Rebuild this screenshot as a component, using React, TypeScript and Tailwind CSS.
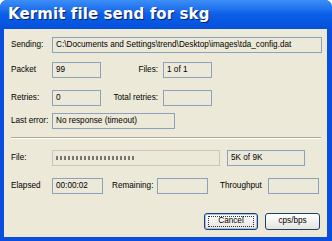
const font = { fontFamily: '"Liberation Sans", Arial, sans-serif' };

function Box({ w, children, muted }: { w: string; children?: React.ReactNode; muted?: boolean }) {
  return (
    <div
      className={`${w} h-[16px] border ${muted ? "border-[#c9c7bc]" : "border-[#8aa2bd]"} flex items-center pl-[3px] text-[8.2px] text-black whitespace-nowrap overflow-hidden`}
    >
      {children}
    </div>
  );
}

function Label({ w, children, right }: { w: string; children: React.ReactNode; right?: boolean }) {
  return (
    <div className={`${w} shrink-0 text-[8.2px] text-black whitespace-nowrap ${right ? "text-right pr-[5px]" : ""}`}>
      {children}
    </div>
  );
}

function Btn({ w, children, focus }: { w: string; children: React.ReactNode; focus?: boolean }) {
  return (
    <div
      className={`${w} h-[17px] rounded-[3px] border border-[#1c3f74] bg-gradient-to-b from-white to-[#e6e4dc] flex items-center justify-center ${
        focus ? "shadow-[inset_0_0_0_1px_#a9c1ea]" : ""
      }`}
    >
      <div
        className={`w-[calc(100%-6px)] h-[11px] flex items-center justify-center text-[8.2px] text-black ${
          focus ? "border border-dotted border-[#333]" : ""
        }`}
      >
        {children}
      </div>
    </div>
  );
}

export default function App() {
  const blocks = Array.from({ length: 20 });
  return (
    <div className="w-[332px] h-[241px] bg-white" style={font}>
      <div className="w-[332px] h-[241px] rounded-t-[7px] bg-[#0a4ee0] flex flex-col overflow-hidden">
        {/* Title bar */}
        <div className="h-[29px] shrink-0 bg-gradient-to-b from-[#3d8ef7] via-[#0a5fe8] to-[#0550da] flex items-center pl-[8px]">
          <span
            className="text-white font-bold text-[15px] tracking-[0.1px] [text-shadow:1px_1px_0_#0a1f6e]"
            style={{ fontFamily: '"DejaVu Sans", Verdana, sans-serif' }}
          >
            Kermit file send for skg
          </span>
        </div>

        {/* Body */}
        <div className="flex-1 ml-[4px] mr-[5px] mb-[4px] bg-[#ece9d8] pl-[7px] flex flex-col">
          <div className="flex items-center mt-[8px]">
            <Label w="w-[41px]">Sending:</Label>
            <Box w="w-[270px]">C:\Documents and Settings\trend\Desktop\images\tda_config.dat</Box>
          </div>

          <div className="flex items-center mt-[9px]">
            <Label w="w-[41px]">Packet</Label>
            <Box w="w-[49px]">99</Box>
            <Label w="w-[62px]" right>
              Files:
            </Label>
            <Box w="w-[49px]">1 of 1</Box>
          </div>

          <div className="flex items-center mt-[12px]">
            <Label w="w-[41px]">Retries:</Label>
            <Box w="w-[49px]">0</Box>
            <Label w="w-[62px]" right>
              Total retries:
            </Label>
            <Box w="w-[49px]" />
          </div>

          <div className="flex items-center mt-[7px]">
            <Label w="w-[41px]">Last error:</Label>
            <Box w="w-[123px]">No response (timeout)</Box>
          </div>

          <div className="mt-[8px] mr-[6px] border-t border-[#aca899] border-b border-b-white" />

          <div className="flex items-center mt-[11px]">
            <Label w="w-[41px]">File:</Label>
            <Box w="w-[168px]" muted>
              <div className="flex gap-[2px]">
                {blocks.map((_, i) => (
                  <div key={i} className="w-[2px] h-[4px] bg-[#76746e]" />
                ))}
              </div>
            </Box>
            <div className="w-[7px]" />
            <Box w="w-[78px]">5K of 9K</Box>
          </div>

          <div className="flex items-center mt-[12px]">
            <Label w="w-[41px]">Elapsed</Label>
            <Box w="w-[51px]">00:00:02</Box>
            <div className="w-[9px]" />
            <Label w="w-[45px]">Remaining:</Label>
            <Box w="w-[51px]" />
            <div className="w-[12px]" />
            <Label w="w-[48px]">Throughput</Label>
            <Box w="w-[51px]" />
          </div>

          <div className="flex justify-end gap-[7px] mt-[19px] pr-[7px]">
            <Btn w="w-[54px]" focus>
              Cancel
            </Btn>
            <Btn w="w-[55px]">cps/bps</Btn>
          </div>
        </div>
      </div>
    </div>
  );
}
